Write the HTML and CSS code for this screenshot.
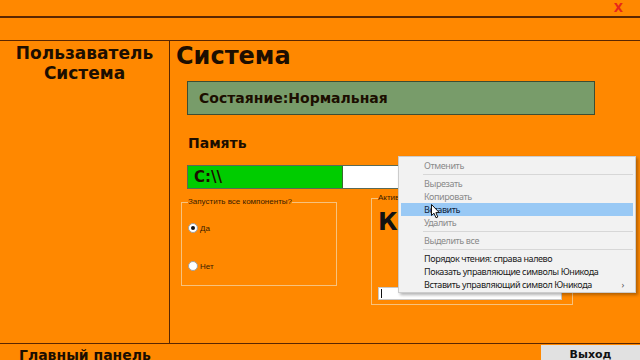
FILE: index.html
```html
<!DOCTYPE html>
<html>
    <head>
        <title>Система</title>
        <meta name="viewport" content="width=device-width, initial-scale=1.0">
        <link rel="stylesheet" href="styles.css">
    </head>
    <body>
        <div class="window">
            <div class="titlebar">
                <span class="close">X</span>
            </div>
            <div class="menubar"></div>
            <div class="main">
                <div class="sidebar">
                    <div class="user">Пользаватель<br>Система</div>
                </div>
                <div class="content">
                    <h1>Система</h1>
                    <div class="status">Состаяние:Нормальная</div>
                    <h2>Память</h2>
                    <div class="memory">
                        <div class="memory-fill" style="width: 38%">C:\\</div>
                    </div>
                    <div class="groups">
                        <fieldset class="group group-start">
                            <legend>Запустить все компоненты?</legend>
                            <label class="radio"><span class="dot checked"></span>Да</label>
                            <label class="radio"><span class="dot"></span>Нет</label>
                        </fieldset>
                        <fieldset class="group group-active">
                            <legend>Активные</legend>
                            <div class="big">Ком</div>
                            <div class="textbox"><span class="caret"></span></div>
                        </fieldset>
                    </div>
                </div>
            </div>
            <div class="footer">
                <div class="footer-title">Главный панель</div>
                <button class="exit">Выход</button>
            </div>

            <div class="context-menu">
                <div class="item disabled">Отменить</div>
                <div class="sep"></div>
                <div class="item disabled">Вырезать</div>
                <div class="item disabled">Копировать</div>
                <div class="item active">Вставить</div>
                <div class="item disabled">Удалить</div>
                <div class="sep"></div>
                <div class="item disabled">Выделить все</div>
                <div class="sep"></div>
                <div class="item">Порядок чтения: справа налево</div>
                <div class="item">Показать управляющие символы Юникода</div>
                <div class="item">Вставить управляющий символ Юникода<span class="arrow">›</span></div>
            </div>

            <svg class="cursor" width="10" height="15" viewBox="0 0 10 15">
                <path d="M0.5 0.5 L0.5 11.5 L3 9.2 L5 13.8 L6.8 13 L4.9 8.6 L8.3 8.6 Z" fill="#fff" stroke="#111" stroke-width="1"/>
            </svg>
        </div>
    </body>
</html>
```

FILE: styles.css
```css
body {
    margin: 0;
    background-color: #ff8800;
    font-family: "DejaVu Sans", Verdana, sans-serif;
    color: #1c0e00;
    overflow: hidden;
}

.window {
    position: relative;
    width: 640px;
    height: 360px;
    overflow: hidden;
}

.titlebar {
    height: 16px;
    border-bottom: 2px solid #5a2600;
    display: flex;
    justify-content: flex-end;
}

.close {
    color: #e8261a;
    font-weight: bold;
    font-size: 12px;
    line-height: 17px;
    margin-right: 17px;
}

.menubar {
    height: 22px;
    border-bottom: 1px solid #5a2600;
}

.main {
    display: grid;
    grid-template-columns: 170px 1fr;
    height: 302px;
    border-bottom: 1px solid #5a2600;
}

.sidebar {
    border-right: 1px solid #5a2600;
}

.user {
    text-align: center;
    font-weight: bold;
    font-size: 17px;
    line-height: 20px;
    margin-top: 2px;
}

.content {
    padding-left: 6px;
}

h1 {
    font-size: 24px;
    margin: 1px 0 0;
    line-height: 28px;
}

.status {
    margin: 11px 0 0 11px;
    width: 395px;
    height: 32px;
    padding-left: 11px;
    background-color: #789c6a;
    border: 1px solid #3d4d33;
    font-weight: bold;
    font-size: 14px;
    line-height: 32px;
}

h2 {
    font-size: 14px;
    margin: 19px 0 0 12px;
    line-height: 18px;
}

.memory {
    margin: 13px 0 0 11px;
    width: 407px;
    height: 22px;
    background-color: #fff;
    border: 1px solid #5a6a55;
    display: flex;
}

.memory-fill {
    background-color: #00cc00;
    border-right: 1px solid #3a6a30;
    font-weight: bold;
    font-size: 15px;
    line-height: 22px;
    padding-left: 6px;
    box-sizing: border-box;
}

.groups {
    display: flex;
    align-items: flex-start;
    margin-top: 4px;
}

.group {
    border: 1px solid #f7c27d;
    margin: 0;
    padding: 0 6px;
    font-family: "Liberation Sans", Arial, sans-serif;
    font-size: 8px;
}

.group legend {
    padding: 0;
    color: #3a1c00;
    line-height: 10px;
}

.group-start {
    margin: 4px 0 0 5px;
    width: 142px;
    height: 87px;
}

.group-active {
    margin-left: 34px;
    width: 188px;
    height: 110px;
    position: relative;
}

.radio {
    display: flex;
    align-items: center;
    gap: 2px;
    height: 10px;
    margin-top: 16px;
    color: #3a1c00;
    font-size: 8px;
}

.radio + .radio {
    margin-top: 28px;
}

.dot {
    width: 8px;
    height: 8px;
    border-radius: 50%;
    background-color: #fff;
    border: 1px solid #a0a0a0;
    position: relative;
}

.dot.checked::after {
    content: "";
    position: absolute;
    left: 2px;
    top: 2px;
    width: 4px;
    height: 4px;
    border-radius: 50%;
    background-color: #111;
}

.big {
    font-family: "DejaVu Sans", Verdana, sans-serif;
    font-weight: bold;
    font-size: 24px;
    line-height: 28px;
    margin-top: 5px;
    color: #111;
}

.textbox {
    position: absolute;
    left: 6px;
    bottom: 4px;
    width: 182px;
    height: 11px;
    background-color: #fff;
    border: 1px solid #c8c8c8;
}

.caret {
    display: block;
    width: 1px;
    height: 9px;
    margin: 1px 0 0 2px;
    background-color: #111;
}

.footer {
    display: flex;
    justify-content: space-between;
    height: 15px;
}

.footer-title {
    font-weight: bold;
    font-size: 14px;
    line-height: 20px;
    margin-left: 19px;
    margin-top: 1px;
}

.exit {
    width: 99px;
    height: 17px;
    margin-top: 1px;
    border: none;
    background-color: #e1e1e1;
    font-family: "DejaVu Sans", Verdana, sans-serif;
    font-weight: bold;
    font-size: 11px;
    color: #111;
    padding: 2px 0 0;
}

.context-menu {
    position: absolute;
    left: 398px;
    top: 156px;
    width: 236px;
    padding: 2px 0 1px;
    background-color: #f2f2f2;
    border: 1px solid #cccccc;
    box-shadow: 2px 2px 3px rgba(0, 0, 0, 0.3);
    font-family: "Noto Sans", "Open Sans", sans-serif;
    font-size: 9px;
    letter-spacing: -0.4px;
}

.item {
    height: 13px;
    line-height: 13px;
    padding-left: 23px;
    margin: 0 2px;
    color: #1a1a1a;
    position: relative;
}

.item.disabled {
    color: #8a8a8a;
}

.item.active {
    background-color: #99c9f5;
    color: #0e2440;
}

.arrow {
    position: absolute;
    right: 9px;
    color: #555;
}

.sep {
    height: 1px;
    background-color: #d7d7d7;
    margin: 2px 2px 2px 24px;
}

.cursor {
    position: absolute;
    left: 431px;
    top: 204px;
}
```
